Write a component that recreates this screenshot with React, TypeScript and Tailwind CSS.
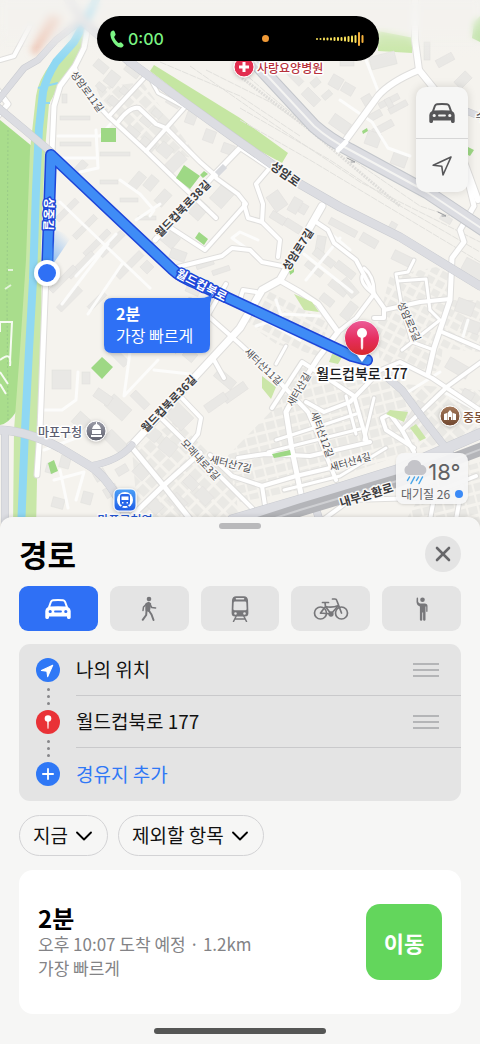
import { ChevronDown, X } from "lucide-react";
import type { ReactNode } from "react";

type Line = { d: string; w: number };
type Building = [x: number, y: number, w: number, h: number, angle: number];

const majorRoads: Line[] = [
  { d: "M66 -4L86 24L130 62L180 99L240 142L300 184L340 207L400 237L480 286", w: 8 },
  { d: "M-4 103L24 68L38 60L56 40L84 18", w: 6 },
  { d: "M-4 106L25 130L51 152", w: 7 },
  { d: "M-4 430Q26 430 60 448L90 466Q106 476 120 502L128 520", w: 8 },
  { d: "M90 466Q119 461 132 445", w: 6 },
  { d: "M5 430V530", w: 7 },
  { d: "M388 378L402 390L424 420L452 456", w: 7 },
  { d: "M232 520L307 498L397 470L484 432", w: 10 },
  { d: "M312 496L320 522", w: 7 },
  { d: "M464 110L484 118", w: 6 },
];

const streets: Line[] = [
  { d: "M88 26L84 48L75 66L60 86L54 106L52 152L46 275L43 350L40 430L37 475", w: 5 },
  { d: "M75 68L82 88L108 116L146 151L176 180L216 218", w: 4 },
  { d: "M415 -4V40L419 70L440 96L478 200", w: 6 },
  { d: "M419 70Q390 82 378 96L340 148", w: 6 },
  { d: "M144 78L110 115", w: 4 },
  { d: "M185 107L146 151", w: 4 },
  { d: "M118 122Q130 106 139 108L156 124L166 128L200 162L216 176", w: 4 },
  { d: "M152 82L158 93L184 107", w: 3 },
  { d: "M240 148L213 176L155 240", w: 5 },
  { d: "M240 148L270 168", w: 4 },
  { d: "M216 178L238 194L246 204L205 250L168 226", w: 4 },
  { d: "M244 204L248 218L262 222L280 240L278 257", w: 4 },
  { d: "M262 222L263 204L256 184L268 170", w: 4 },
  { d: "M178 267L222 256L232 248L250 250L262 262L282 266", w: 4 },
  { d: "M322 206L306 234L280 280L262 290L240 328L132 445", w: 7 },
  { d: "M279 280L300 292L318 304L338 332L318 358L298 390L286 412L292 450L301 494", w: 5 },
  { d: "M316 222L328 230L334 243L356 260L364 275L374 294L384 308L384 318L374 318", w: 4 },
  { d: "M364 268Q374 276 374 292M362 276Q360 284 374 294", w: 3 },
  { d: "M374 294L356 318L338 332", w: 4 },
  { d: "M466 174L474 206L460 230L464 242L452 258L450 300L434 348L428 374", w: 5 },
  { d: "M414 260L408 272L396 274L402 308", w: 3 },
  { d: "M398 281L426 279L430 310", w: 3 },
  { d: "M384 310L420 302L450 299", w: 4 },
  { d: "M402 308L412 342L434 350", w: 3 },
  { d: "M430 310L440 320L402 350", w: 3 },
  { d: "M442 332L484 350", w: 4 },
  { d: "M376 372L400 362L432 378L480 410", w: 4 },
  { d: "M484 360L448 386L402 430L414 452", w: 4 },
  { d: "M206 314L240 344L270 372L308 412L320 440L336 480", w: 4 },
  { d: "M214 360L224 378", w: 4 },
  { d: "M272 408L302 362L330 380L354 396L367 442", w: 4 },
  { d: "M374 377L350 402L324 412L306 402", w: 4 },
  { d: "M276 440L326 424L356 414", w: 3 },
  { d: "M268 452L300 444L360 429", w: 3 },
  { d: "M238 458L265 454L310 456L370 442", w: 4 },
  { d: "M284 490L340 476L386 448", w: 3 },
  { d: "M210 455L232 476L262 486L296 476L330 468", w: 4 },
  { d: "M262 486L266 512", w: 4 },
  { d: "M374 398L364 440M346 396L356 434", w: 3 },
  { d: "M402 430L390 414L382 418L386 430L414 448", w: 4 },
  { d: "M130 445L163 485L194 524", w: 5 },
  { d: "M128 520L163 486L200 453", w: 5 },
  { d: "M158 415L200 456L252 508", w: 4 },
  { d: "M180 396L201 418L198 434L190 444", w: 4 },
  { d: "M320 522L350 500L420 498L476 476", w: 4 },
  { d: "M430 520L434 498M456 520L462 486", w: 4 },
  { d: "M190 300L188 306L204 322L226 284", w: 4 },
  { d: "M238 306L243 290L256 292", w: 4 },
  { d: "M286 346L276 364", w: 3 },
  { d: "M-4 88L8 104L-4 118", w: 5 },
  { d: "M0 60L14 56L30 26", w: 4 },
];

const alleys: Line[] = [
  { d: "M58 136H100L114 120M56 158H96M96 130L98 168L80 172", w: 3 },
  { d: "M60 202L110 250L150 288M76 276L116 234M108 244L62 304M122 264L88 314", w: 3 },
  { d: "M78 372L76 400L62 410H44M44 450L76 438M54 480L84 472L76 500M60 470L68 508", w: 3 },
  { d: "M130 352L124 396L158 360M154 370L190 374", w: 3 },
  { d: "M340 100L372 122L388 148L410 156M366 60L380 96", w: 3 },
  { d: "M258 240L240 232L232 238L246 248", w: 3 },
  { d: "M120 180L140 194L154 210L150 216M136 220L160 204", w: 3 },
  { d: "M340 238L306 280M324 228L350 250M304 254L352 292", w: 3 },
  { d: "M262 310L276 318L284 314L320 316M256 326L268 322L300 340M276 300L282 318", w: 3 },
  { d: "M444 392L476 410M408 392L440 372M462 340L468 320", w: 3 },
];

const buildings: Building[] = [
  [60, 116, 30, 4, 0], [60, 142, 31, 4, 0], [100, 152, 30, 4, 0], [62, 94, 5, 9, 0],
  [94, 62, 14, 9, 40], [106, 72, 12, 14, 38], [124, 68, 16, 7, 38], [96, 84, 10, 6, 40],
  [108, 98, 12, 8, 40], [120, 88, 10, 7, 40], [126, 128, 14, 7, 40], [140, 140, 16, 8, 40],
  [158, 144, 14, 12, 40], [170, 152, 12, 20, 45], [186, 112, 10, 12, 20], [204, 130, 11, 12, 20],
  [222, 144, 12, 10, 20], [166, 100, 14, 6, 30], [140, 118, 12, 7, 40], [152, 110, 10, 7, 40],
  [76, 160, 8, 16, 42], [100, 180, 18, 4, 0], [120, 198, 18, 4, 0], [138, 216, 18, 4, 0],
  [132, 172, 10, 18, 40], [146, 176, 10, 14, 40], [158, 190, 10, 16, 42], [64, 196, 6, 28, 45],
  [82, 212, 6, 30, 45], [94, 226, 6, 34, 45], [78, 248, 6, 34, 45], [60, 262, 6, 34, 45],
  [108, 228, 7, 32, 45], [126, 248, 7, 34, 45], [66, 284, 7, 30, 45], [94, 290, 6, 22, 45],
  [142, 262, 10, 10, 45], [162, 232, 16, 14, 40], [170, 250, 16, 10, 20], [196, 262, 18, 5, -18],
  [212, 268, 18, 5, -18], [186, 286, 14, 8, 25], [214, 186, 16, 20, 42], [190, 200, 16, 18, 42],
  [52, 370, 19, 19, 0], [82, 372, 8, 12, 0], [106, 400, 24, 15, 42], [74, 414, 14, 14, 42],
  [94, 392, 18, 10, 35], [114, 344, 8, 24, -45], [136, 390, 8, 20, -45], [110, 430, 12, 24, -45],
  [146, 428, 14, 12, 40], [160, 440, 16, 14, 40], [170, 404, 18, 24, -45], [214, 374, 22, 10, 40],
  [222, 388, 26, 9, -35], [204, 398, 24, 9, -35], [166, 342, 14, 8, 40], [184, 350, 12, 10, 40],
  [94, 470, 12, 10, -30], [104, 486, 14, 10, -30], [116, 466, 12, 8, -30], [134, 466, 14, 12, 45],
  [60, 456, 10, 12, 15], [82, 492, 10, 12, 15], [52, 498, 12, 10, 15], [46, 464, 8, 9, 15],
  [148, 500, 14, 12, 45], [170, 496, 16, 12, 45], [184, 478, 14, 10, 45], [196, 490, 16, 12, 45],
  [340, 52, 14, 14, 0], [370, 54, 26, 13, -14], [330, 76, 12, 12, 30], [342, 84, 12, 10, 30],
  [286, 74, 18, 7, 45], [302, 92, 18, 10, 45], [322, 92, 10, 6, -40], [312, 78, 7, 9, 50],
  [330, 118, 20, 12, 35], [362, 96, 12, 10, 60], [368, 112, 14, 7, -28], [372, 124, 22, 7, -28],
  [366, 132, 14, 14, 20], [392, 152, 15, 14, 20], [378, 98, 22, 6, -28], [388, 104, 20, 6, -28],
  [386, 98, 6, 10, -28], [436, 56, 18, 8, -28], [424, 42, 6, 18, 0], [458, 72, 10, 16, 45],
  [270, 214, 16, 8, 32], [284, 222, 18, 8, 32], [300, 204, 7, 10, 30], [316, 236, 9, 18, 10],
  [312, 254, 24, 8, 38], [304, 266, 20, 6, 38], [334, 266, 22, 8, 38], [328, 284, 20, 8, 38],
  [344, 278, 10, 20, -40], [320, 296, 14, 8, 38], [344, 302, 10, 18, 38], [328, 224, 30, 7, 28],
  [360, 236, 18, 9, 30], [388, 222, 7, 13, 30], [392, 254, 22, 10, 26], [462, 262, 24, 15, 28],
  [456, 300, 18, 14, 20], [462, 320, 18, 12, 20], [446, 362, 24, 12, 30], [410, 400, 8, 30, 30],
  [460, 390, 12, 16, 30], [270, 192, 14, 18, -35], [290, 198, 10, 15, 30], [440, 216, 12, 6, 30],
];

const railLines = [
  "M206 70L270 102L340 150L404 182L480 222",
  "M190 66L250 108L300 142L360 182L480 242",
  "M236 66L268 94L310 128L350 158L420 206L480 226",
  "M240 108L330 160L390 200L480 252",
  "M240 120L310 160L400 214L480 262",
  "M160 62L240 96L300 136",
];

type LabelProps = { x: number; y: number; r?: number; size?: number; bold?: boolean; children: ReactNode };

function MapLabel({ x, y, r = 0, size = 12, bold, children }: LabelProps) {
  return (
    <text
      x={x}
      y={y}
      transform={`rotate(${r} ${x} ${y})`}
      fontSize={size}
      fontWeight={bold ? 700 : 400}
      fill={bold ? "#3c3c3f" : "#4c4c50"}
      textAnchor="middle"
      dominantBaseline="central"
      className="stroke-[#faf9f7] [paint-order:stroke]"
      strokeWidth="3"
      strokeLinejoin="round"
    >
      {children}
    </text>
  );
}

function RouteMap() {
  return (
    <svg
      viewBox="0 0 480 530"
      preserveAspectRatio="xMidYMin slice"
      className="block h-[530px] w-full bg-[#f5f3ee]"
      role="img"
      aria-label="월드컵북로 177까지의 경로 지도"
    >
      <defs>
        <pattern id="houses" width="11" height="10" patternUnits="userSpaceOnUse" patternTransform="rotate(28)">
          <rect x="1" y="1" width="8" height="7" fill="#eae9e5" />
        </pattern>
        <pattern id="houses2" width="11" height="11" patternUnits="userSpaceOnUse" patternTransform="rotate(-14)">
          <rect x="1" y="1" width="9" height="8" fill="#eae9e5" />
        </pattern>
        <pattern id="houses3" width="13" height="12" patternUnits="userSpaceOnUse" patternTransform="rotate(45)">
          <rect x="1" y="1" width="10" height="9" fill="#eae9e5" />
        </pattern>
        <linearGradient id="pin" x1="0" y1="0" x2="0" y2="1">
          <stop offset="0" stopColor="#ec5a97" />
          <stop offset=".55" stopColor="#e52d5c" />
          <stop offset="1" stopColor="#d72a2c" />
        </linearGradient>
        <linearGradient id="station" x1="0" y1="0" x2="0" y2="1">
          <stop offset="0" stopColor="#4ca0f7" />
          <stop offset="1" stopColor="#1f5de6" />
        </linearGradient>
        <linearGradient id="hall" x1="0" y1="0" x2="0" y2="1">
          <stop offset="0" stopColor="#9b9ca8" />
          <stop offset="1" stopColor="#5f616e" />
        </linearGradient>
        <linearGradient id="school" x1="0" y1="0" x2="0" y2="1">
          <stop offset="0" stopColor="#a4785a" />
          <stop offset="1" stopColor="#70472f" />
        </linearGradient>
        <linearGradient id="heading" x1="0" y1="1" x2=".6" y2="0">
          <stop offset="0" stopColor="#4798f5" stopOpacity=".8" />
          <stop offset="1" stopColor="#4798f5" stopOpacity="0" />
        </linearGradient>
        <linearGradient id="haze" x1="0" y1="0" x2="0" y2="1">
          <stop offset="0" stopColor="#f3f2ef" stopOpacity=".8" />
          <stop offset="1" stopColor="#f3f2ef" stopOpacity="0" />
        </linearGradient>
        <filter id="soft" x="-20%" y="-20%" width="140%" height="140%">
          <feGaussianBlur stdDeviation="3" />
        </filter>
        <filter id="drop" x="-30%" y="-30%" width="160%" height="170%">
          <feDropShadow dx="0" dy="1" stdDeviation="2" floodOpacity=".25" />
        </filter>
      </defs>

      {/* parks and river banks */}
      <path d="M0 120L33 147L30 260L25 370L16 412Q8 424 0 425Z" fill="#a9dd8c" />
      <path d="M8 130L7 300L8 420" stroke="#9acb88" strokeWidth="1" strokeDasharray="2 2" fill="none" />
      <path d="M84 24L52 62Q38 80 36 96L30 150L26 260L20 350L14 430L13 530H36L38 430L42 330L41 250L45 150L49 104L62 80L76 60L90 26Z" fill="#c8e7a8" />
      <path d="M98 -4L84 24L74 42L56 62Q46 78 43 92L39 128L36 190L33 280L29 350L25 430L21 530" fill="none" stroke="#8fd8f3" strokeWidth="8" />
      <path d="M38 88L58 83M40 103H50" stroke="#8fd8f3" strokeWidth="2" />
      <path d="M154 65L240 118L288 153L282 163L240 140L150 71Z" fill="#c5e6a2" />
      <path d="M378 31L414 38L412 53L378 51Z" fill="#c5e6a2" />
      <path d="M474 22L480 16V42L472 38Z" fill="#b0df92" />
      <path d="M0 360Q12 350 10 366M0 372L8 384M0 384L6 394M0 332V322H12L10 362" fill="none" stroke="#f6fbf2" strokeWidth="2" />
      <path d="M8 270H13M5 289L11 285" stroke="#e3f3da" strokeWidth="2" />
      <path d="M30 50L50 14L62 18L36 56Z" fill="#eec4b2" filter="url(#soft)" />

      {/* housing blocks */}
      <path d="M270 290L330 320L318 356L276 344L240 318L254 296Z" fill="url(#houses)" />
      <path d="M390 276L452 264L440 372L380 362L376 330Z" fill="url(#houses)" />
      <path d="M440 300H480V352L440 348Z" fill="url(#houses)" />
      <path d="M278 404L302 364L400 372L416 450L300 490L240 502L214 470Z" fill="url(#houses2)" />
      <path d="M132 450L176 420L236 480L238 520H138Z" fill="url(#houses3)" />
      <path d="M404 384L480 390V436L420 448Z" fill="url(#houses3)" />
      <path d="M96 88L142 82L200 160L150 148L110 118Z" fill="url(#houses3)" />
      <path d="M432 476L480 462V530H400Z" fill="url(#houses2)" />

      <g fill="#e9e8e5" stroke="#e0dfdc" strokeWidth=".5">
        {buildings.map(([x, y, w, h, angle], id) => (
          <rect key={id} x={x} y={y} width={w} height={h} transform={`rotate(${angle} ${x + w / 2} ${y + h / 2})`} />
        ))}
      </g>

      {/* railway yard */}
      <g fill="none" stroke="#e2e1dd" strokeWidth="1">
        {railLines.map((d) => (
          <path key={d} d={d} strokeDasharray="7 1" />
        ))}
      </g>
      <path d="M242 78L310 130L350 164L400 206" stroke="#dfdedb" strokeWidth="3" strokeDasharray="2 1" fill="none" />

      {/* roads */}
      <g fill="none" strokeLinecap="round" strokeLinejoin="round">
        {alleys.map(({ d, w }) => (
          <path key={d} d={d} stroke="#fcfcfb" strokeWidth={w} />
        ))}
        {streets.map(({ d, w }) => (
          <path key={d} d={d} stroke="#dfdedc" strokeWidth={w + 2} />
        ))}
        {streets.map(({ d, w }) => (
          <path key={d} d={d} stroke="#fff" strokeWidth={w} />
        ))}
        {majorRoads.map(({ d, w }) => (
          <path key={d} d={d} stroke="#c9cbd0" strokeWidth={w + 1} />
        ))}
        {majorRoads.map(({ d, w }) => (
          <path key={d} d={d} stroke="#dcdde2" strokeWidth={w} />
        ))}
        <path d="M217 174L225 166" stroke="#d8dade" strokeWidth="6" strokeLinecap="butt" />
        <path d="M240 44L262 70L314 126Q330 140 350 150L427 192L484 230" stroke="#c3c6cb" strokeWidth="14" />
        <path d="M240 44L262 70L314 126Q330 140 350 150L427 192L484 230" stroke="#dcdde2" strokeWidth="12" />
        <path d="M240 44L262 70L314 126Q330 140 350 150L427 192L484 230" stroke="#f4f4f2" strokeWidth="2" />
        <path d="M338 150L346 142" stroke="#fff" strokeWidth="5" />
        <path d="M250 526L300 510L397 481L484 448" stroke="#b4b5b9" strokeWidth="13" />
        <path d="M250 526L300 510L397 481L484 448" stroke="#cfd0d3" strokeWidth="2" />
        <path d="M347 158L355 162L351 162M438 212L446 216L442 216" stroke="#999b9f" />
      </g>

      <path d="M101 128H116V142H101ZM184 165L200 176L190 189L176 178ZM204 171L208 174L203 178L200 175ZM102 357L113 367L102 379L91 368ZM48 463L54 460L58 471L51 474ZM199 232L208 239L204 245L195 238ZM362 131L367 128L368 131L363 134ZM289 270L294 266L294 272L290 275ZM468 147L474 150L470 156L466 154ZM272 454L290 450L291 455L274 458Z" fill="#9ed885" />
      <path d="M294 294L312 302L319 312L304 310ZM262 376L276 387L271 399L262 388ZM332 354H344L338 364L329 362ZM390 410L408 412L404 422L386 414ZM410 428L416 424L426 438L420 441Z" fill="#cbe6a8" />

      {/* route */}
      <g fill="none" strokeLinecap="round" strokeLinejoin="round">
        <path d="M47 273L51 155L172 269Q180 277 200 285L352 356L367 360" stroke="#1d45d8" strokeWidth="12" />
        <path d="M47 273L51 155L172 269Q180 277 200 285L352 356L367 360" stroke="#3f8cf6" strokeWidth="9" />
      </g>
      <path d="M47 273L56 230L72 236Z" fill="url(#heading)" />
      <circle cx="47" cy="273" r="13" fill="#fff" filter="url(#drop)" />
      <circle cx="47" cy="273" r="9" fill="#2f70f5" />

      <g fontSize="12" fontWeight="700" fill="#fff" stroke="#1d45d8" strokeWidth="3" strokeLinejoin="round" className="[paint-order:stroke]" textAnchor="middle" dominantBaseline="central">
        <text x="50" y="214" transform="rotate(92 50 214)">성중길</text>
        <text x="202" y="284" transform="rotate(27 202 284)">월드컵북로</text>
      </g>

      <MapLabel x={88} y={91} r={54} size={10}>성암로11길</MapLabel>
      <MapLabel x={182} y={208} r={-46} size={11} bold>월드컵북로38길</MapLabel>
      <MapLabel x={286} y={173} r={36} size={12} bold>성암로</MapLabel>
      <MapLabel x={297} y={249} r={-57} size={11} bold>성암로7길</MapLabel>
      <MapLabel x={410} y={321} r={66} size={10}>성암로5길</MapLabel>
      <MapLabel x={264} y={366} r={44} size={10}>새터산11길</MapLabel>
      <MapLabel x={298} y={389} r={-60} size={10}>새터산길</MapLabel>
      <MapLabel x={323} y={434} r={70} size={10}>새터산12길</MapLabel>
      <MapLabel x={350} y={461} r={-16} size={10}>새터산4길</MapLabel>
      <MapLabel x={231} y={463} r={14} size={10}>새터산7길</MapLabel>
      <MapLabel x={201} y={459} r={47} size={10}>모래내로3길</MapLabel>
      <MapLabel x={168} y={403} r={-46} size={11} bold>월드컵북로36길</MapLabel>
      <MapLabel x={366} y={494} r={-17} size={12} bold>내부순환로</MapLabel>
      <MapLabel x={481} y={115} size={12}>수</MapLabel>

      {/* places */}
      <circle cx="244" cy="67" r="10" fill="#e22f50" stroke="#fff" strokeWidth="1" filter="url(#drop)" />
      <path d="M244 62V72M239 67H249" stroke="#fff" strokeWidth="3" />
      <g strokeWidth="3" stroke="#fff" strokeLinejoin="round" className="font-medium [paint-order:stroke]" dominantBaseline="central">
        <text x="257" y="67" fontSize="12" fill="#b7313c">사랑요양병원</text>
        <text x="38" y="431" fontSize="12" fill="#5b5d70">마포구청</text>
        <text x="463" y="416" fontSize="12" fill="#7c5138">중동</text>
        <text x="125" y="519" fontSize="12" fill="#2457d6" textAnchor="middle">마포구청역</text>
      </g>
      <circle cx="96" cy="431" r="10" fill="url(#hall)" stroke="#fff" strokeWidth="1" filter="url(#drop)" />
      <path d="M91 437H102V435H91ZM92 434V430H101V434M92 429Q93 425 96 424V422H97V424Q100 425 101 429Z" fill="#fff" />
      <circle cx="450" cy="416" r="10" fill="url(#school)" stroke="#fff" strokeWidth="1" filter="url(#drop)" />
      <path d="M444 414L447 413V420H444ZM447.500 420V413L450 410L452.500 413V420H451V417H449V420ZM453 413L456 414V420H453Z" fill="#fff" />
      <rect x="114" y="489" width="22" height="22" rx="5" fill="url(#station)" stroke="#fff" strokeWidth="1" filter="url(#drop)" />
      <circle cx="125" cy="500" r="8" fill="#fff" />
      <path d="M122 494H128Q130 494 130 496V503Q130 505 128 505L130 508H128L127 506H123L122 508H120L122 505Q120 505 120 503V496Q120 494 122 494Z" fill="#2766e9" />
      <path d="M121.500 496.500H128.500V500H121.500ZM122 502H123.500V503.500H122ZM126.500 502H128V503.500H126.500Z" fill="#fff" />

      {/* destination pin */}
      <path d="M362 320a18 18 0 0 1 5 35L362 362L357 355a18 18 0 0 1 5 -35Z" fill="#fff" filter="url(#drop)" />
      <circle cx="362" cy="338" r="17" fill="url(#pin)" />
      <circle cx="362" cy="333" r="5" fill="#fff" />
      <path d="M361 336H363L362.800 348Q362 351 361.200 348Z" fill="#fff" stroke="#fff" strokeWidth=".5" />
      <text x="362" y="373" fontSize="14" fontWeight="500" textAnchor="middle" dominantBaseline="central" fill="#1c1c1e" stroke="#fff" strokeWidth="4" strokeLinejoin="round" className="[paint-order:stroke]">
        월드컵북로 177
      </text>

      {/* travel time callout */}
      <path d="M112 298H200Q209 298 215 292Q210 299 210 306V345Q210 353 202 353H112Q104 353 104 345V306Q104 298 112 298Z" fill="#2f70f5" filter="url(#drop)" />
      <text x="116" y="320" fontSize="16" fontWeight="700" fill="#fff">2분</text>
      <text x="116" y="342" fontSize="16" fill="#fff">가장 빠르게</text>

      <rect width="480" height="60" fill="url(#haze)" />
    </svg>
  );
}

function CarIcon({ className }: { className?: string }) {
  return (
    <svg viewBox="0 0 26 20" className={className} fill="currentColor" fillRule="evenodd" aria-hidden="true">
      <path d="M5 2.400Q5.800.500 7.800.300Q13-.200 18.200.300Q20.200.500 21 2.400L23 8Q25.700 9.300 25.700 12V18.500Q25.700 19.900 24.300 19.900H23.300Q22 19.900 22 18.500V17.400H4V18.500Q4 19.900 2.700 19.900H1.700Q.300 19.900.300 18.500V12Q.300 9.300 3 8ZM5.300 7.500Q13 6.800 20.700 7.500L19.200 3.300Q18.800 2.400 17.700 2.300Q13 1.900 8.300 2.300Q7.200 2.400 6.800 3.300ZM5.200 10.900A1.600 1.600 0 1 0 5.200 14.100A1.600 1.600 0 1 0 5.200 10.900ZM20.800 10.900A1.600 1.600 0 1 0 20.800 14.100A1.600 1.600 0 1 0 20.800 10.900ZM10 11.600Q9.100 11.600 9.100 12.500T10 13.400H16Q16.900 13.400 16.900 12.500T16 11.600Z" />
    </svg>
  );
}

function WalkIcon() {
  return (
    <svg viewBox="0 0 16 26" className="h-[26px] w-4" fill="none" stroke="currentColor" strokeWidth="2" strokeLinecap="round" strokeLinejoin="round" aria-hidden="true">
      <circle cx="8" cy="3" r="2.300" fill="currentColor" stroke="none" />
      <path d="M5.500 8L7.500 7L9 8L7.800 14.500L5.500 14Z" fill="currentColor" strokeWidth="2.400" />
      <path d="M5 8.500L2.500 11L2 14.500M9 8.500L10.800 11.500L14.600 12" strokeWidth="1.500" />
      <path d="M7.800 14.500L10.500 18.500L12.500 24M5.500 15L5.200 19L1.700 23.800" />
    </svg>
  );
}

function TramIcon() {
  return (
    <svg viewBox="0 0 18 26" className="h-[26px] w-[18px]" fill="currentColor" fillRule="evenodd" aria-hidden="true">
      <path d="M5 .300H13Q16.500.500 17 4L17.400 17Q17.400 20.600 14 20.600H4Q.600 20.600.600 17L1 4Q1.500.500 5 .300ZM5.300 2Q4.700 2 4.700 2.700T5.300 3.400H12.700Q13.300 3.400 13.300 2.700T12.700 2ZM4 5.500Q2.800 5.500 2.700 6.700L2.400 13Q2.400 14.300 3.700 14.300H14.300Q15.600 14.300 15.600 13L15.300 6.700Q15.200 5.500 14 5.500ZM4.500 16.200A1.300 1.300 0 1 0 4.500 18.800A1.300 1.300 0 1 0 4.500 16.200ZM13.500 16.200A1.300 1.300 0 1 0 13.500 18.800A1.300 1.300 0 1 0 13.500 16.200Z" />
      <path d="M5 20.500L2.500 25.500M13 20.500L15.500 25.500M4 23H14" stroke="currentColor" strokeWidth="1.500" strokeLinecap="round" />
    </svg>
  );
}

function BikeIcon() {
  return (
    <svg viewBox="0 0 36 24" className="h-6 w-9" fill="none" stroke="currentColor" strokeWidth="1.700" strokeLinecap="round" strokeLinejoin="round" aria-hidden="true">
      <circle cx="7.500" cy="16" r="6" />
      <circle cx="28.500" cy="16" r="6" />
      <path d="M7.500 16L12.500 9.500L18 17L25.500 8.500Q19 11 12.500 9.500M7.500 16L18 17M28.500 16L23.800 3.500Q23.400 2 22 2H19.500M9.500 5.500H15.500M12 5.500L12.500 9.500" />
      <circle cx="18" cy="17" r="1.800" fill="currentColor" />
    </svg>
  );
}

function HailIcon() {
  return (
    <svg viewBox="0 0 12 24" className="h-6 w-3" fill="currentColor" aria-hidden="true">
      <circle cx="6.500" cy="2.700" r="2.300" />
      <path d="M4 6.400H8.800Q11.500 6.600 11.500 9V14.200Q11.500 15 10.900 15T10.200 14.200V9.500H9.500V22.700Q9.500 23.700 8.300 23.700T7.100 22.700V15.500H6.300V22.700Q6.300 23.700 5.100 23.700T3.900 22.700V9.500Q.800 8.500.500 5L.600 1.500Q.700.600 1.400.600T2.100 1.500V4.500Q2.400 6 4 6.400Z" />
    </svg>
  );
}

function ArrowIcon({ className, filled }: { className?: string; filled?: boolean }) {
  return (
    <svg viewBox="0 0 22 22" className={className} fill={filled ? "currentColor" : "none"} stroke="currentColor" strokeWidth="1.600" strokeLinejoin="round" aria-hidden="true">
      <path d="M20 2L2.200 10.300L10.800 11.300L12 20Z" />
    </svg>
  );
}

function PinIcon() {
  return (
    <svg viewBox="0 0 24 24" className="size-6" fill="currentColor" aria-hidden="true">
      <circle cx="12" cy="8.500" r="3.300" />
      <path d="M11.200 11H12.800L12.500 18.300Q12 19.500 11.500 18.300Z" />
    </svg>
  );
}

const modes = [
  { label: "자동차", icon: <CarIcon className="h-5 w-[26px]" /> },
  { label: "도보", icon: <WalkIcon /> },
  { label: "대중교통", icon: <TramIcon /> },
  { label: "자전거", icon: <BikeIcon /> },
  { label: "차량 호출", icon: <HailIcon /> },
];

const waves = [2, 2, 3, 3, 3, 4, 4, 4, 5, 6, 7, 8, 14, 8];

function DynamicIsland() {
  return (
    <div className="absolute inset-x-0 top-4 flex justify-center pr-1">
      <div className="flex h-[45px] w-[282px] items-center rounded-full bg-black pr-[15px] pl-[13px]">
        <svg viewBox="0 0 14 18" className="h-[18px] w-3.5 fill-[#7cf584]" aria-hidden="true">
          <path d="M1.500 1.300Q3.500-.400 4.600 1.400L5.500 4Q5.900 5.200 4.600 6.200Q4 6.800 4.400 7.800Q5.500 10.700 7.800 12.600Q8.600 13.200 9.400 12.700Q10.700 11.900 11.700 12.700L13.300 14.400Q14.300 15.700 12.500 17Q9.500 18.800 5.500 15Q1 10.200.400 5Q.200 2.500 1.500 1.300Z" />
        </svg>
        <span className="ml-1 font-['Inter',sans-serif] text-[16px] font-medium text-[#7cf584]">0:00</span>
        <span className="ml-auto size-[7px] rounded-full bg-[#f09a37]" />
        <svg viewBox="0 0 48 16" className="ml-[47px] h-4 w-12" aria-hidden="true">
          {waves.map((h, idx) => (
            <rect
              key={idx}
              x={idx * 3.5}
              y={8 - h / 2}
              width="2"
              height={h}
              rx="1"
              fill={idx > 11 ? "#f5b13d" : "#f7e05a"}
            />
          ))}
        </svg>
      </div>
    </div>
  );
}

function MapControls() {
  return (
    <div className="absolute top-[87px] right-3 flex w-[52px] flex-col rounded-[10px] bg-[#f6f6f5] text-[#565658] shadow-[0_0_10px_rgba(0,0,0,0.14)]">
      <button type="button" aria-label="지도 유형" className="flex h-[52px] items-center justify-center border-b border-[#d6d6d6]">
        <CarIcon className="h-5 w-[26px]" />
      </button>
      <button type="button" aria-label="현재 위치" className="flex h-[53px] items-center justify-center">
        <ArrowIcon className="size-[22px]" />
      </button>
    </div>
  );
}

function Weather() {
  return (
    <div className="absolute right-3 bottom-[26px] w-[72px] rounded-lg bg-[#f6f6f5]/95 py-1 text-[#616164] shadow-sm">
      <div className="flex h-[30px] items-center justify-center gap-px">
        <svg viewBox="0 0 24 26" className="h-[26px] w-6" aria-hidden="true">
          <path d="M5.500 16A5 5 0 0 1 4.500 6.500Q6 1 11.500 1Q17 1 18.300 6A5 5 0 0 1 18.500 16Z" fill="#c4c4c9" />
          <path d="M6.500 18L4.500 21.500M11.500 18L8 24.500M15.500 18L13.500 21.500M19.500 18L16 24.500" stroke="#48a6ea" strokeWidth="1.500" strokeLinecap="round" />
        </svg>
        <span className="font-['Inter',sans-serif] text-[22px]">18°</span>
      </div>
      <div className="flex h-[13px] items-center justify-between px-[5px] text-[12px] whitespace-nowrap">
        대기질 26
        <span className="size-2 rounded-full bg-[#3b8bf7]" />
      </div>
    </div>
  );
}

function Dots() {
  return (
    <div className="flex h-7 flex-col items-center justify-center gap-1">
      {[0, 1, 2].map((t) => (
        <span key={t} className="size-[3px] rounded-full bg-[#87878a]" />
      ))}
    </div>
  );
}

function ReorderButton({ label }: { label: string }) {
  return (
    <button type="button" aria-label={`${label} 순서 변경`} className="flex w-[26px] flex-col gap-1">
      {[0, 1, 2].map((t) => (
        <span key={t} className="h-0.5 w-full bg-[#b4b5b7]" />
      ))}
    </button>
  );
}

function Stops() {
  return (
    <div className="mt-[13px] flex rounded-[11px] bg-[#e4e4e4] pl-[17px]">
      <div className="flex w-6 flex-col pt-3.5">
        <span className="flex size-6 items-center justify-center rounded-full bg-[#2f78f6] text-white">
          <ArrowIcon filled className="mt-0.5 mr-0.5 size-3.5" />
        </span>
        <Dots />
        <span className="rounded-full bg-[#e93237] text-white">
          <PinIcon />
        </span>
        <Dots />
        <span className="flex size-6 items-center justify-center rounded-full bg-[#2f78f6]">
          <svg viewBox="0 0 12 12" className="size-3 stroke-white" strokeWidth="1.800" strokeLinecap="round" aria-hidden="true">
            <path d="M6 .900V11.100M.900 6H11.100" />
          </svg>
        </span>
      </div>
      <ul className="ml-4 flex-1 text-[19px] text-[#111]">
        {["나의 위치", "월드컵북로 177"].map((stop) => {
          return (
            <li key={stop} className="flex h-[52px] items-center justify-between border-b border-[#c9c9cb] pr-[22px]">
              {stop}
              <ReorderButton label={stop} />
            </li>
          );
        })}
        <li className="h-[53px]">
          <button type="button" className="h-full w-full text-left text-[#2f78f6]">
            경유지 추가
          </button>
        </li>
      </ul>
    </div>
  );
}

function Chip({ label, options }: { label: string; options: string[] }) {
  return (
    <div className="grid items-center">
      <select
        aria-label={label}
        className="field-sizing-content col-start-1 row-start-1 h-[41px] appearance-none rounded-full border border-[#d3d3d5] bg-transparent pr-[39px] pl-[13px] text-[19px] text-[#111]"
      >
        {options.map((option) => (
          <option key={option}>{option}</option>
        ))}
      </select>
      <ChevronDown className="pointer-events-none col-start-1 row-start-1 mr-2.5 size-7 justify-self-end" strokeWidth={1.6} aria-hidden="true" />
    </div>
  );
}

export default function App() {
  return (
    <div className="bg-[#f6f6f5] font-['Noto_Sans_CJK_KR',sans-serif] text-black">
      <div className="relative">
        <RouteMap />
        <div className="absolute inset-x-0 top-0 h-12 backdrop-blur-[3px] [mask-image:linear-gradient(black_50%,transparent)]" />
        <DynamicIsland />
        <MapControls />
        <Weather />
      </div>

      <main className="relative -mt-[13px] rounded-t-[12px] bg-[#f6f6f5] px-[19px] pt-1.5 pb-2.5 shadow-[0_-1px_4px_rgba(0,0,0,0.12)]">
        <div className="mx-auto h-1.5 w-[42px] rounded-full bg-[#b9b9bb]" />
        <header className="mt-[7px] flex h-9 items-center justify-between">
          <h1 className="text-[31px] font-bold">경로</h1>
          <button type="button" aria-label="닫기" className="flex size-9 items-center justify-center rounded-full bg-[#e4e4e4] text-[#67676a]">
            <X className="size-6" strokeWidth={2.6} />
          </button>
        </header>

        <div className="mt-3.5 grid grid-cols-5 gap-3">
          {modes.map(({ label, icon }, idx) => {
            return (
              <button
                key={label}
                type="button"
                aria-label={label}
                aria-pressed={idx === 0}
                className={
                  idx === 0
                    ? "flex h-[45px] items-center justify-center rounded-[9px] bg-[#2f70f5] text-white"
                    : "flex h-[45px] items-center justify-center rounded-[9px] bg-[#e4e4e4] text-[#77777a]"
                }
              >
                {icon}
              </button>
            );
          })}
        </div>

        <Stops />

        <div className="mt-3.5 flex gap-2.5">
          <Chip label="출발 시간" options={["지금", "나중에"]} />
          <Chip label="제외할 항목" options={["제외할 항목", "통행료"]} />
        </div>

        <section className="mt-3.5 flex h-36 items-center justify-between rounded-[14px] bg-white px-[19px]">
          <div className="text-[17px] leading-6 text-[#838386]">
            <h2 className="text-2xl leading-7 font-bold text-black">2분</h2>
            <p>오후 10:07 도착 예정 · 1.2km</p>
            <p>가장 빠르게</p>
          </div>
          <button type="button" className="size-[76px] rounded-[14px] bg-[#63d65c] text-[22px] font-bold text-white">
            이동
          </button>
        </section>

        <div className="mx-auto mt-3.5 h-1.5 w-[172px] rounded-full bg-[#555655]" />
      </main>
    </div>
  );
}
